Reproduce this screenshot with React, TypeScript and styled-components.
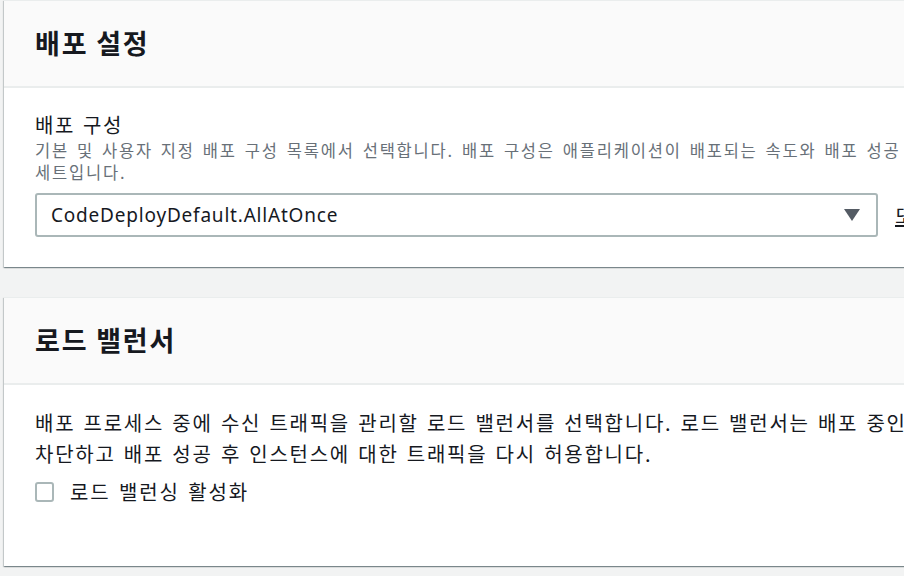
import React from "react";
import styled, { createGlobalStyle } from "styled-components";

const Global = createGlobalStyle`
  html, body {
    margin: 0;
    padding: 0;
    background: #f2f3f3;
    overflow: hidden;
    width: 904px;
    height: 576px;
  }
  body {
    font-family: "Noto Sans", "Noto Sans CJK KR", sans-serif;
    color: #16191f;
  }
`;

const Page = styled.div`
  display: flex;
  flex-direction: column;
  gap: 30px;
  padding-left: 4px;
  width: 1250px;
`;

const Card = styled.section`
  background: #fff;
  border-top: 1px solid #eaeded;
  box-shadow: 0 1px 1px 0 rgba(0, 28, 36, 0.3), 1px 1px 1px 0 rgba(0, 28, 36, 0.15),
    -1px 1px 1px 0 rgba(0, 28, 36, 0.15);
`;

const CardHeader = styled.header`
  box-sizing: border-box;
  height: 87px;
  display: flex;
  align-items: center;
  padding: 0 0 3px 31px;
  background: #fafafa;
  border-bottom: 2px solid #eaeded;
`;

const Title = styled.h2`
  margin: 0;
  font-family: "Noto Sans CJK KR", sans-serif;
  font-size: 27px;
  font-weight: 700;
  letter-spacing: 1.8px;
  color: #16191f;
`;

const CardBody = styled.div<{ $pt: number; $pb: number }>`
  padding: ${(p) => p.$pt}px 31px ${(p) => p.$pb}px;
`;

const Label = styled.div`
  font-family: "Noto Sans CJK KR", sans-serif;
  font-size: 20px;
  line-height: 26px;
  letter-spacing: 1.6px;
  word-spacing: 2px;
  color: #16191f;
`;

const Description = styled.div`
  margin-top: 1px;
  font-family: "Noto Sans CJK KR", sans-serif;
  font-size: 16.5px;
  line-height: 22px;
  letter-spacing: 1.8px;
  word-spacing: 2.5px;
  color: #687078;
  width: 1100px;
  word-break: keep-all;
`;

const SelectRow = styled.div`
  display: flex;
  align-items: center;
  gap: 17px;
  margin-top: 10px;
`;

const Select = styled.div`
  box-sizing: border-box;
  flex: none;
  width: 843px;
  height: 44px;
  border: 2px solid #aab7b8;
  border-radius: 3px;
  display: flex;
  align-items: center;
  justify-content: space-between;
  padding: 0 16px 0 14px;
  background: #fff;
`;

const SelectValue = styled.span`
  font-family: "Noto Sans", sans-serif;
  font-size: 19px;
  letter-spacing: 0.8px;
  color: #16191f;
`;

const Arrow = styled.svg`
  width: 16px;
  height: 12px;
  fill: #545b64;
`;

const Link = styled.span`
  font-family: "Noto Sans CJK KR", sans-serif;
  font-size: 20px;
  letter-spacing: 1.6px;
  color: #16191f;
  text-decoration: underline;
  white-space: nowrap;
`;

const Paragraph = styled.p`
  margin: 0;
  font-family: "Noto Sans CJK KR", sans-serif;
  font-size: 20px;
  line-height: 31px;
  letter-spacing: 1.75px;
  word-spacing: 2px;
  color: #16191f;
  width: 1110px;
  word-break: keep-all;
`;

const CheckRow = styled.label`
  display: flex;
  align-items: center;
  gap: 16px;
  margin-top: 9px;
  height: 27px;
`;

const Box = styled.span`
  box-sizing: border-box;
  width: 19px;
  height: 20px;
  border: 2px solid #aab7b8;
  border-radius: 3px;
  background: #fff;
`;

const CheckText = styled.span`
  font-family: "Noto Sans CJK KR", sans-serif;
  font-size: 20px;
  letter-spacing: 1.9px;
  word-spacing: 2px;
  color: #16191f;
`;

export default function App() {
  return (
    <>
      <Global />
      <Page>
        <Card>
          <CardHeader>
            <Title>배포 설정</Title>
          </CardHeader>
          <CardBody $pt={24} $pb={30}>
            <Label>배포 구성</Label>
            <Description>
              기본 및 사용자 지정 배포 구성 목록에서 선택합니다. 배포 구성은 애플리케이션이 배포되는 속도와 배포 성공 또는 실패 조건에 대한 규칙 세트입니다.
            </Description>
            <SelectRow>
              <Select>
                <SelectValue>CodeDeployDefault.AllAtOnce</SelectValue>
                <Arrow viewBox="0 0 16 12">
                  <polygon points="0,0 16,0 8,12" />
                </Arrow>
              </Select>
              <Link>또는 배포 구성 생성</Link>
            </SelectRow>
          </CardBody>
        </Card>
        <Card>
          <CardHeader>
            <Title>로드 밸런서</Title>
          </CardHeader>
          <CardBody $pt={22} $pb={61}>
            <Paragraph>
              배포 프로세스 중에 수신 트래픽을 관리할 로드 밸런서를 선택합니다. 로드 밸런서는 배포 중인 인스턴스로의 트래픽을 차단하고 배포 성공 후 인스턴스에 대한 트래픽을 다시 허용합니다.
            </Paragraph>
            <CheckRow>
              <Box />
              <CheckText>로드 밸런싱 활성화</CheckText>
            </CheckRow>
          </CardBody>
        </Card>
      </Page>
    </>
  );
}
